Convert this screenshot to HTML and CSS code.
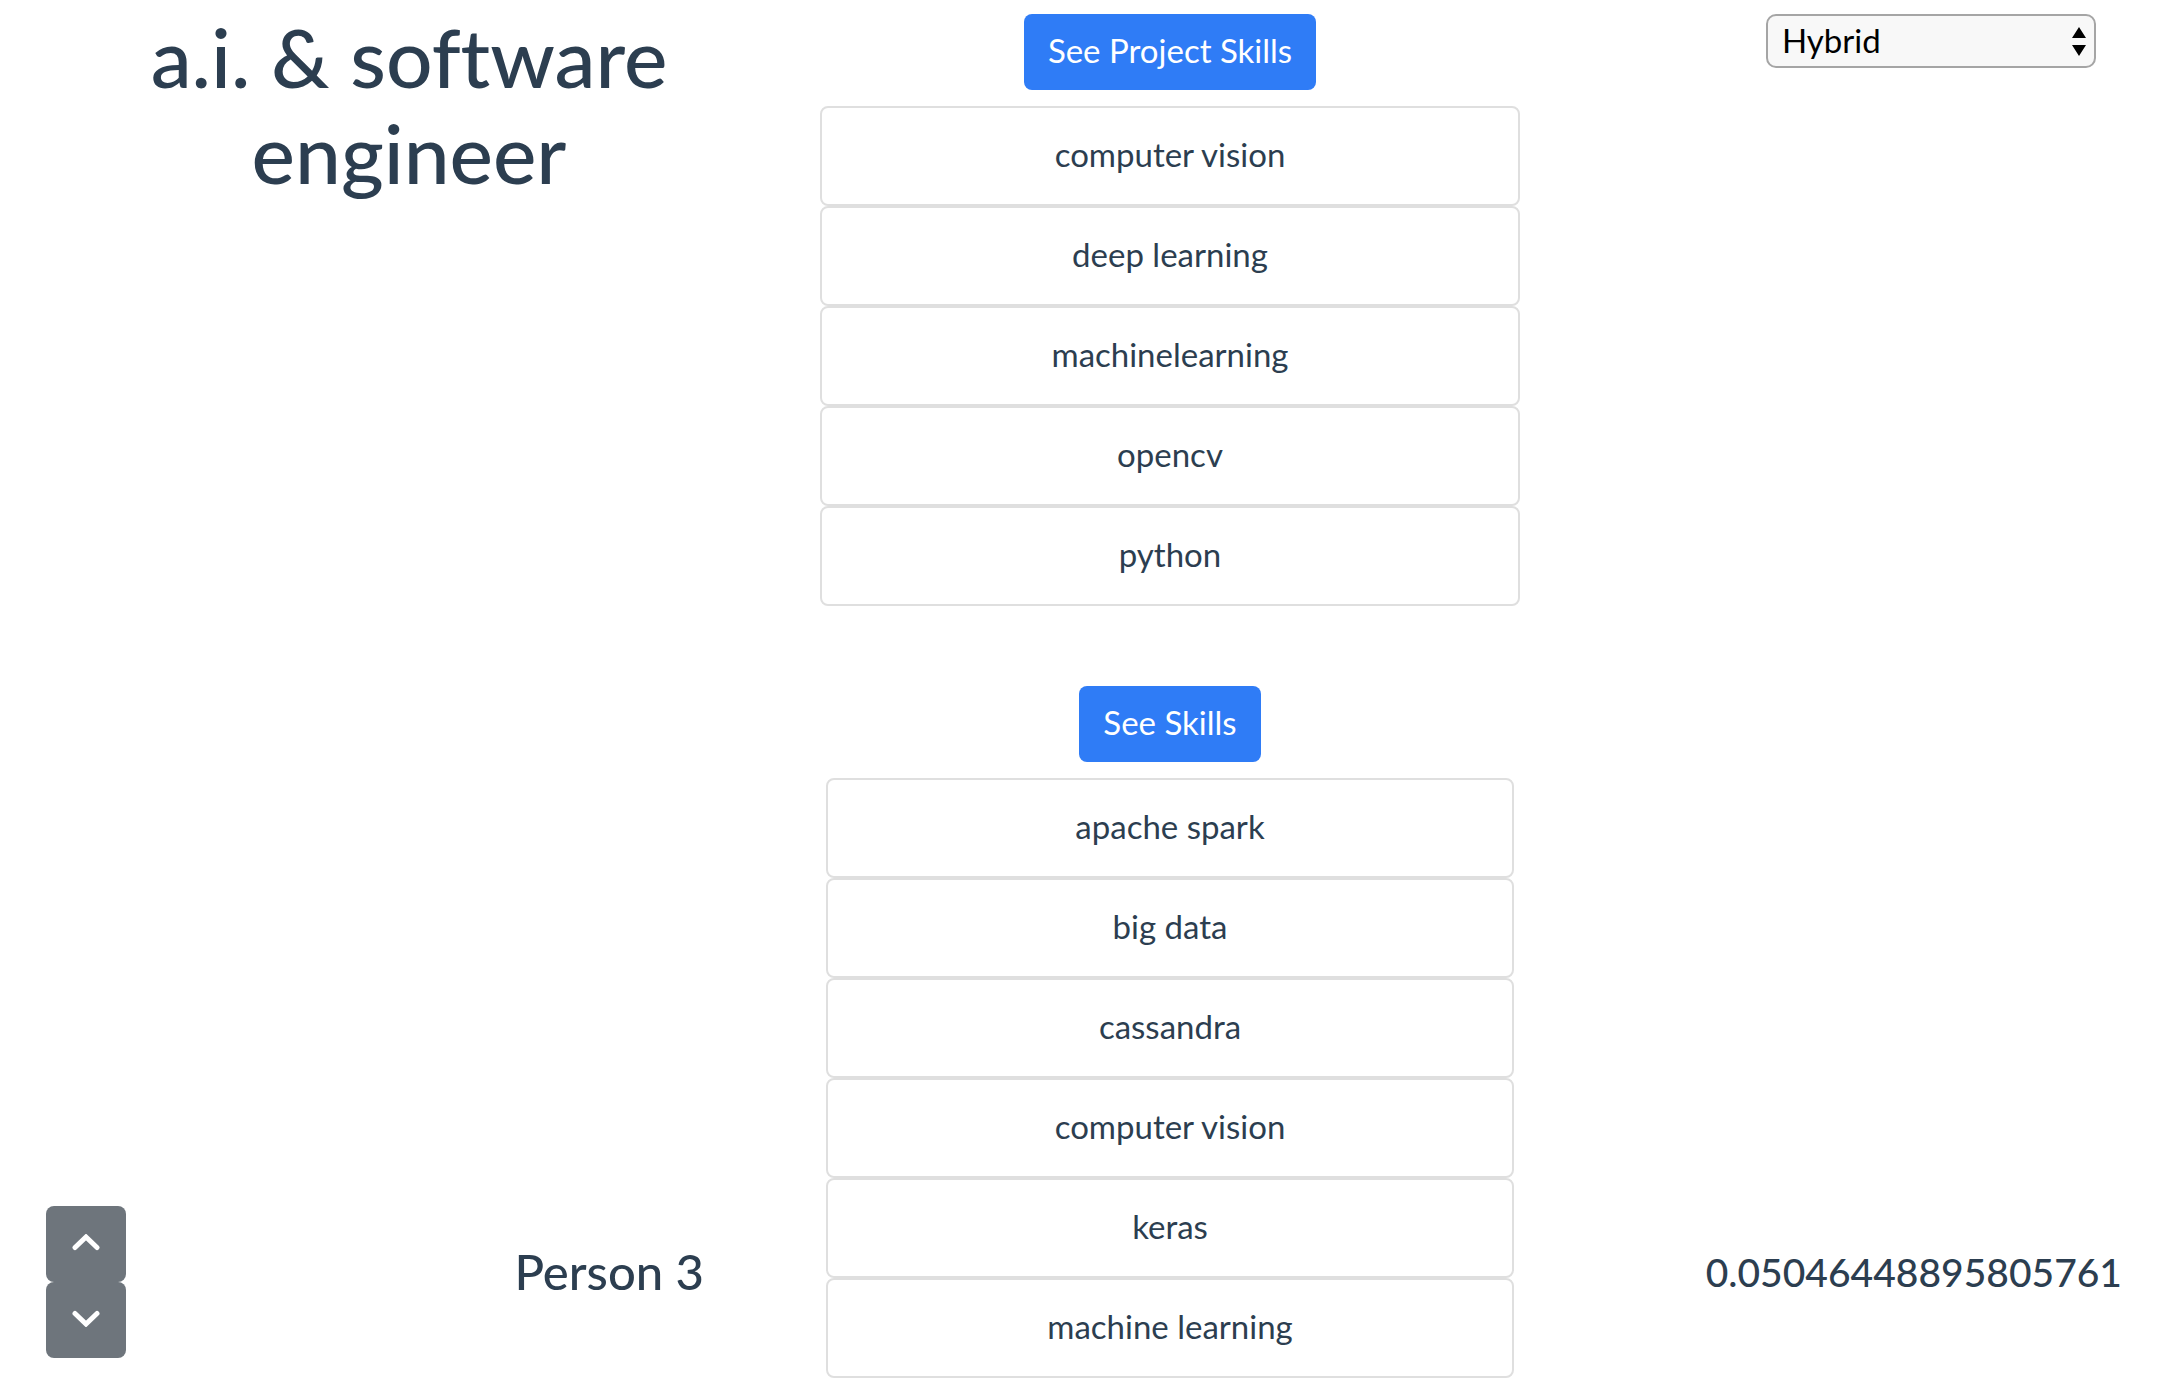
FILE: index.html
```html
<!DOCTYPE html>
<html lang="en">
<head>
<meta charset="utf-8">
<title>Skill matches</title>
<link rel="stylesheet" href="styles.css">
</head>
<body>
<main class="matches">
  <h1 class="title">a.i. &amp; software engineer</h1>
  <section class="skills">
    <button class="btn btn-primary" type="button">See Project Skills</button>
    <ul class="cards cards-wide">
      <li class="card">computer vision</li>
      <li class="card">deep learning</li>
      <li class="card">machinelearning</li>
      <li class="card">opencv</li>
      <li class="card">python</li>
    </ul>
  </section>
  <div class="mode">
    <select class="mode-select" aria-label="Matching mode">
      <option>Hybrid</option>
    </select>
    <svg class="mode-arrows" viewBox="0 0 14 29" aria-hidden="true"><path d="M7 0l7 11H0zM7 29l7-11H0z"/></svg>
  </div>
  <div class="person">
    <div class="rank">
      <button class="btn btn-secondary" type="button" aria-label="Move up">
        <svg class="chevron" viewBox="0 0 28 17" aria-hidden="true"><path d="M3 13.5L14 3l11 10.5"/></svg>
      </button>
      <button class="btn btn-secondary" type="button" aria-label="Move down">
        <svg class="chevron" viewBox="0 0 28 17" aria-hidden="true"><path d="M3 3.5L14 14 25 3.5"/></svg>
      </button>
    </div>
    <h2 class="name">Person 3</h2>
  </div>
  <section class="skills">
    <button class="btn btn-primary" type="button">See Skills</button>
    <ul class="cards">
      <li class="card">apache spark</li>
      <li class="card">big data</li>
      <li class="card">cassandra</li>
      <li class="card">computer vision</li>
      <li class="card">keras</li>
      <li class="card">machine learning</li>
    </ul>
  </section>
  <p class="score">0.05046448895805761</p>
</main>
</body>
</html>
```
FILE: styles.css
```css
* {
  box-sizing: border-box;
}

body {
  margin: 0;
  background: #fff;
  color: #2c3e50;
  font-family: Lato, "Open Sans", sans-serif;
  font-size: 33px;
  line-height: 48px;
  font-variant-ligatures: none;
}

.matches {
  display: grid;
  grid-template-columns: 818fr 704fr 650fr;
  row-gap: 80px;
  padding-top: 14px;
}

.title {
  max-width: 600px;
  margin: -6px 0 0;
  justify-self: center;
  font-size: 82px;
  font-weight: 500;
  line-height: 96px;
  text-align: center;
}

.skills {
  display: flex;
  flex-direction: column;
  align-items: center;
  gap: 16px;
}

.btn {
  border: 0;
  border-radius: 8px;
  color: #fff;
  font: inherit;
}

.btn-primary {
  padding: 12px 24px 16px;
  background: #2f7cf6;
}

.btn-secondary {
  display: flex;
  align-items: center;
  justify-content: center;
  width: 80px;
  height: 76px;
  padding: 0 0 4px;
  background: #6e757c;
}

.cards {
  width: 688px;
  margin: 0;
  padding: 0;
  list-style: none;
}

.cards-wide {
  width: 700px;
}

.card {
  padding: 22px 24px 26px;
  border: 2px solid #dfdfdf;
  border-radius: 8px;
  text-align: center;
}

.mode {
  position: relative;
  justify-self: end;
  align-self: start;
  width: 330px;
  margin-right: 76px;
}

.mode-select {
  display: block;
  width: 100%;
  height: 54px;
  padding: 0 40px 6px 14px;
  appearance: none;
  border: 2px solid #a5a5a5;
  border-radius: 10px;
  background: #f8f8f8;
  color: #000;
  font: inherit;
}

.mode-arrows {
  position: absolute;
  top: 13px;
  right: 10px;
  width: 14px;
  height: 29px;
  pointer-events: none;
}

.person {
  display: flex;
  align-self: end;
  align-items: center;
  justify-content: space-between;
  padding: 0 114px 20px 46px;
}

.chevron {
  width: 28px;
  height: 17px;
  fill: none;
  stroke: #fff;
  stroke-width: 5;
  stroke-linecap: round;
}

.name {
  margin: 0 0 22px;
  font-size: 49px;
  font-weight: 500;
}

.score {
  align-self: end;
  justify-self: end;
  margin: 0 50px 82px 0;
  font-size: 39px;
  font-weight: 500;
}
```
